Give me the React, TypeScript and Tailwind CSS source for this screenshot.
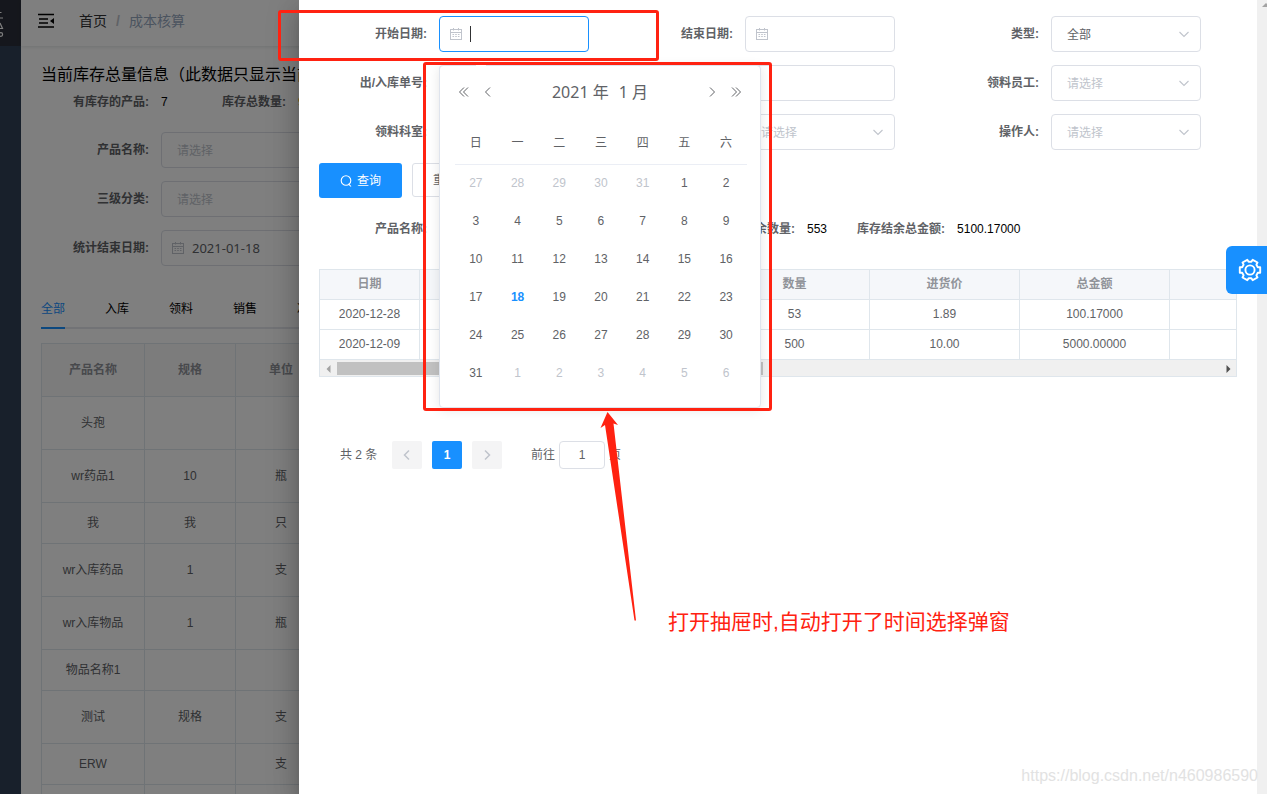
import React from 'react';

type FieldKind = 'date' | 'text' | 'select';

interface FieldProps {
  id: string;
  label: string;
  kind: FieldKind;
  value?: string;
  active?: boolean;
  wide?: boolean;
  children?: React.ReactNode;
}

const CalendarIcon = () => (
  <svg className="h-3 w-3" viewBox="0 0 12 12" fill="none" stroke="currentColor" strokeWidth="1">
    <rect x="0.5" y="1.5" width="11" height="10" />
    <path d="M0.5 4.5h11M3.5 0v2.5M8.5 0v2.5" />
    <path d="M2.5 6.5h7M2.5 8.5h7" strokeDasharray="1.6 1.1" />
  </svg>
);

const ChevronDown = () => (
  <svg className="h-3 w-3" viewBox="0 0 12 12" fill="none" stroke="currentColor" strokeWidth="1.1">
    <path d="M1.5 4l4.5 4.5L10.5 4" />
  </svg>
);

const Chevron = ({ d, className }: { d: string; className?: string }) => (
  <svg className={className ?? 'h-3 w-3'} viewBox="0 0 12 12" fill="none" stroke="currentColor">
    <path d={d} />
  </svg>
);

const Field = ({ id, label, kind, value = '', active, wide, children }: FieldProps) => (
  <div className="mb-[13px] flex">
    <label htmlFor={id} className="flex h-9 w-[120px] shrink-0 items-center justify-end pr-3 font-bold text-[#606266]">
      {label}
    </label>
    <div className={`relative ${wide ? 'w-[200px]' : 'w-[150px]'}`}>
      {kind === 'select' ? (
        <select
          id={id}
          defaultValue={value}
          className={`h-9 w-full appearance-none rounded border border-[#dcdfe6] bg-white px-[15px] pt-0.5 outline-none ${value ? 'text-[#606266]' : 'text-[#c0c4cc]'}`}
        >
          <option value="">请选择</option>
          {value && <option value={value}>{value}</option>}
        </select>
      ) : (
        <input
          id={id}
          type="text"
          defaultValue={value}
          className={`h-9 w-full rounded border bg-white pr-3 pl-[30px] font-['Noto_Sans',sans-serif] text-[13px] text-[#606266] outline-none ${active ? 'border-[#1890ff]' : 'border-[#dcdfe6]'}`}
        />
      )}
      {kind === 'date' && (
        <span className="pointer-events-none absolute inset-y-0 left-[11px] flex items-center text-[#c0c4cc]">
          <CalendarIcon />
        </span>
      )}
      {kind === 'select' && (
        <span className="pointer-events-none absolute inset-y-0 right-[11px] flex items-center text-[#c0c4cc]">
          <ChevronDown />
        </span>
      )}
      {active && <span className="absolute top-[10px] left-[31px] h-4 w-px bg-[#303133]" />}
      {children}
    </div>
  </div>
);

const weekDays = ['日', '一', '二', '三', '四', '五', '六'];
const weeks = [
  [27, 28, 29, 30, 31, 1, 2],
  [3, 4, 5, 6, 7, 8, 9],
  [10, 11, 12, 13, 14, 15, 16],
  [17, 18, 19, 20, 21, 22, 23],
  [24, 25, 26, 27, 28, 29, 30],
  [31, 1, 2, 3, 4, 5, 6],
];

const dayClass = (day: number, row: number) => {
  if ((row === 0 && day > 7) || (row === 5 && day < 31)) return 'text-[#c0c4cc]';
  if (day === 18) return 'font-bold text-[#1890ff]';
  return 'text-[#606266]';
};

const DatePicker = () => (
  <div className="absolute top-[49px] left-0 z-10 w-[322px] rounded border border-[#dfe4ed] bg-white pr-[13px] pb-[15px] pl-[15px] shadow-[0_2px_12px_0_rgba(0,0,0,0.1)]">
    <span className="absolute -top-px left-9 h-px w-[10px] bg-white" />
    <div className="mt-[11px] flex h-[30px] items-center text-[#606266]">
      <button type="button" aria-label="前一年" className="ml-[3px]">
        <Chevron d="M6 1.5L1.5 6L6 10.5M10 1.5L5.500 6L10 10.5" />
      </button>
      <button type="button" aria-label="上个月" className="ml-3">
        <Chevron d="M8 1.500L3.500 6L8 10.5" />
      </button>
      <div className="flex flex-1 justify-center gap-[10px] font-['Noto_Sans','Noto_Sans_CJK_SC',sans-serif] text-base">
        <span>2021 年</span>
        <span>1 月</span>
      </div>
      <button type="button" aria-label="下个月" className="mr-3">
        <Chevron d="M4 1.500L8.500 6L4 10.5" />
      </button>
      <button type="button" aria-label="后一年" className="mr-[5px]">
        <Chevron d="M2 1.500L6.500 6L2 10.5M6 1.500L10.500 6L6 10.5" />
      </button>
    </div>
    <table className="mt-[15px] w-full table-fixed border-collapse text-center">
      <thead>
        <tr className="h-[42px] border-b border-[#ebeef5] text-[#606266]">
          {weekDays.map(day => (
            <th key={day} className="font-normal">{day}</th>
          ))}
        </tr>
      </thead>
      <tbody>
        {weeks.map((week, row) => (
          <tr key={row} className="h-[38px]">
            {week.map(day => (
              <td key={day}>
                <button type="button" className={dayClass(day, row)}>{day}</button>
              </td>
            ))}
          </tr>
        ))}
      </tbody>
    </table>
  </div>
);

const stockRows = [
  { name: '头孢', spec: '', unit: '', tall: true },
  { name: 'wr药品1', spec: '10', unit: '瓶', tall: true },
  { name: '我', spec: '我', unit: '只', tall: false },
  { name: 'wr入库药品', spec: '1', unit: '支', tall: true },
  { name: 'wr入库物品', spec: '1', unit: '瓶', tall: true },
  { name: '物品名称1', spec: '', unit: '', tall: false },
  { name: '测试', spec: '规格', unit: '支', tall: true },
  { name: 'ERW', spec: '', unit: '支', tall: false },
  { name: '', spec: '', unit: '', tall: true },
];

const StockPage = () => (
  <div className="flex h-full">
    <aside className="w-[21px] shrink-0 bg-[#304156]">
      <div className="h-[46px] overflow-hidden bg-[#2b2f3a]">
        <svg className="h-[46px] w-[21px]" viewBox="0 0 21 46" fill="none" stroke="#fff" strokeWidth="1.2">
          <path d="M0 12.500h1.500M0 18h3M0 23l2.500 5.500H0" />
          <circle cx="0.8" cy="34.500" r="1.800" />
        </svg>
      </div>
    </aside>
    <div className="min-w-0 flex-1">
      <header className="flex h-[46px] items-center bg-white pb-1 text-sm shadow-[0_1px_4px_rgba(0,21,41,0.12)]">
        <button type="button" aria-label="菜单" className="ml-[17px]">
          <svg className="h-4 w-4" viewBox="0 0 16 16" fill="none" stroke="#000" strokeWidth="1.600">
            <path d="M0 1.500h16M1 6h9M1 10h9M0 14h16" />
            <path d="M16 5v6l-4-3z" fill="#000" stroke="none" />
          </svg>
        </button>
        <nav className="ml-[25px] flex">
          <a href="#home" className="text-[#303133]">首页</a>
          <span className="mx-[9px] font-bold text-[#c0c4cc]">/</span>
          <span className="text-[#97a8be]">成本核算</span>
        </nav>
      </header>
      <main className="px-5 pt-[19px]">
        <h1 className="text-base leading-5 whitespace-nowrap">当前库存总量信息（此数据只显示当前库存）</h1>
        <div className="mt-[7px] mb-5 flex leading-5 whitespace-nowrap">
          <div className="w-[120px] pr-3 text-right font-bold text-[#606266]">有库存的产品:</div>
          <div className="w-[61px]">7</div>
          <div className="w-[76px] pr-3 font-bold text-[#606266]">库存总数量:</div>
          <div className="text-[#ff8c00]">980</div>
        </div>
        <Field id="stock-name" label="产品名称:" kind="select" wide />
        <Field id="stock-category" label="三级分类:" kind="select" wide />
        <Field id="stock-end" label="统计结束日期:" kind="date" value="2021-01-18" wide />
        <div className="mt-6 flex gap-10 border-b-2 border-[#e4e7ed]">
          <button type="button" className="-mb-0.5 h-[39px] border-b-2 border-[#1890ff] text-[#1890ff]">全部</button>
          <button type="button">入库</button>
          <button type="button">领料</button>
          <button type="button">销售</button>
          <button type="button">冲销</button>
        </div>
        <table className="mt-[14px] w-[467px] table-fixed border-collapse border border-[#dfe6ec] text-center text-[#606266]">
          <thead>
            <tr className="h-[53px] bg-[#f8f8f9] text-[#909399]">
              <th className="w-[103px] border border-[#dfe6ec]">产品名称</th>
              <th className="w-[91px] border border-[#dfe6ec]">规格</th>
              <th className="w-[91px] border border-[#dfe6ec]">单位</th>
              <th className="border border-[#dfe6ec]">库存数量</th>
            </tr>
          </thead>
          <tbody>
            {stockRows.map((row, i) => (
              <tr key={i} className={row.tall ? 'h-[53px]' : 'h-[41px]'}>
                <td className="border border-[#dfe6ec]">{row.name}</td>
                <td className="border border-[#dfe6ec]">{row.spec}</td>
                <td className="border border-[#dfe6ec]">{row.unit}</td>
                <td className="border border-[#dfe6ec]" />
              </tr>
            ))}
          </tbody>
        </table>
      </main>
    </div>
  </div>
);

const records = [
  { date: '2020-12-28', count: '53', price: '1.89', total: '100.17000' },
  { date: '2020-12-09', count: '500', price: '10.00', total: '5000.00000' },
];

const cell = 'border-r border-b border-[#dfe6ec] pb-0.5';

const RecordTable = () => (
  <div className="overflow-hidden border border-[#dfe6ec]">
    <table className="w-[1950px] table-fixed border-separate border-spacing-0 text-center text-[#606266]">
      <thead>
        <tr className="h-[30px] bg-[#f5f7fa] text-[#909399]">
          <th className={`${cell} w-[100px]`}>日期</th>
          <th className={`${cell} w-[150px]`}>类型</th>
          <th className={`${cell} w-[150px]`}>单号</th>
          <th className={`${cell} w-[150px]`}>数量</th>
          <th className={`${cell} w-[150px]`}>进货价</th>
          <th className={`${cell} w-[150px]`}>总金额</th>
          <th className={cell} />
        </tr>
      </thead>
      <tbody>
        {records.map(record => (
          <tr key={record.date} className="h-[30px]">
            <td className={cell}>{record.date}</td>
            <td className={cell} />
            <td className={cell} />
            <td className={cell}>{record.count}</td>
            <td className={cell}>{record.price}</td>
            <td className={cell}>{record.total}</td>
            <td className={cell} />
          </tr>
        ))}
      </tbody>
    </table>
    <div className="flex h-4 items-end bg-[#f0f0f0]">
      <svg className="h-[15px] w-[17px]" viewBox="0 0 17 15">
        <path d="M10.500 4v8L6.500 8z" fill="#a3a3a3" />
      </svg>
      <div className="mb-px h-[13px] w-[426px] bg-[#c1c1c1]" />
      <svg className="ml-auto h-[15px] w-[17px]" viewBox="0 0 17 15">
        <path d="M7.500 4v8L11.500 8z" fill="#505050" />
      </svg>
    </div>
  </div>
);

const Pagination = () => (
  <div className="mt-16 ml-[21px] flex h-7 items-center text-[#606266]">
    <span className="w-[52px]">共 2 条</span>
    <button type="button" aria-label="上一页" className="flex h-7 w-[30px] items-center justify-center rounded-xs bg-[#f4f4f5] text-[#c0c4cc]">
      <Chevron d="M8 1.500L3.500 6L8 10.5" className="h-3 w-3 stroke-[1.5]" />
    </button>
    <button type="button" className="mx-[10px] h-7 w-[30px] rounded-xs bg-[#1890ff] font-bold text-white">1</button>
    <button type="button" aria-label="下一页" className="flex h-7 w-[30px] items-center justify-center rounded-xs bg-[#f4f4f5] text-[#c0c4cc]">
      <Chevron d="M4 1.500L8.500 6L4 10.5" className="h-3 w-3 stroke-[1.5]" />
    </button>
    <label htmlFor="page-jump" className="ml-[29px]">前往</label>
    <input id="page-jump" type="text" defaultValue="1" className="mx-1 h-7 w-[46px] rounded border border-[#dcdfe6] text-center outline-none" />
    <span>页</span>
  </div>
);

const Drawer = () => (
  <section className="relative flex min-w-0 flex-1 bg-white shadow-[0_8px_10px_-5px_rgba(0,0,0,0.2),0_16px_24px_2px_rgba(0,0,0,0.14),0_6px_30px_5px_rgba(0,0,0,0.12)]">
    <div className="min-w-0 flex-1 px-5 pt-4">
      <form className="grid grid-cols-3">
        <Field id="start" label="开始日期:" kind="date" active>
          <DatePicker />
        </Field>
        <Field id="end" label="结束日期:" kind="date" />
        <Field id="type" label="类型:" kind="select" value="全部" />
        <Field id="order" label="出/入库单号:" kind="text" />
        <Field id="supplier" label="供应商:" kind="text" />
        <Field id="staff" label="领料员工:" kind="select" />
        <Field id="department" label="领料科室:" kind="select" />
        <Field id="batch" label="批次:" kind="select" />
        <Field id="operator" label="操作人:" kind="select" />
      </form>
      <div className="flex gap-[10px]">
        <button type="button" className="flex h-[35px] w-[83px] items-center justify-center gap-[5px] rounded-[3px] bg-[#1890ff] text-white">
          <svg className="h-3 w-3" viewBox="0 0 12 12" fill="none" stroke="currentColor" strokeWidth="1.1">
            <circle cx="6" cy="5.500" r="4.800" />
            <path d="M8.500 8.800L11 11.500" />
          </svg>
          查询
        </button>
        <button type="button" className="h-[34px] w-[66px] rounded-[3px] border border-[#dcdfe6] text-[#606266]">重置</button>
      </div>
      <div className="mt-[21px] mb-[30px] flex leading-5 whitespace-nowrap">
        <div className="w-[120px] pr-3 text-right font-bold text-[#606266]">产品名称:</div>
        <div className="w-[280px]" />
        <div className="w-[88px] pr-3 text-right font-bold text-[#606266]">库存结余数量:</div>
        <div>553</div>
        <div className="ml-[30px] pr-3 font-bold text-[#606266]">库存结余总金额:</div>
        <div>5100.17000</div>
      </div>
      <RecordTable />
      <Pagination />
    </div>
    <div className="w-[10px] shrink-0 overflow-hidden bg-[#f0f0f0]">
      <svg className="h-4 w-4" viewBox="0 0 16 16">
        <path d="M5 7h8L9 3z" fill="#a3a3a3" />
      </svg>
    </div>
    <button type="button" aria-label="设置" className="absolute top-[246px] right-0 flex h-12 w-[41px] items-center rounded-l-md bg-[#1890ff] pl-3">
      <svg className="h-6 w-6" viewBox="0 0 24 24" fill="none" stroke="#fff" strokeWidth="1.900" strokeLinejoin="round">
        <path d="M19.800 9.200L22.200 9.300V14.700L19.800 14.800L18.400 17.300L19.500 19.500L14.700 22.200L13.400 20.200H10.600L9.300 22.200L4.500 19.500L5.600 17.300L4.200 14.800L1.800 14.700V9.300L4.200 9.200L5.600 6.700L4.500 4.500L9.300 1.800L10.600 3.800H13.400L14.700 1.800L19.500 4.500L18.400 6.700Z" />
        <circle cx="12" cy="12" r="4.600" />
      </svg>
    </button>
  </section>
);

// red marks drawn over the page
const Annotations = () => (
  <div className="pointer-events-none absolute inset-0 z-20">
    <div className="absolute top-[10px] left-[278px] h-[51px] w-[381px] rounded-[3px] border-3 border-[#ff2211]" />
    <div className="absolute top-[62px] left-[423px] h-[349px] w-[349px] rounded-[3px] border-3 border-[#ff2211]" />
    <svg className="absolute top-[411px] left-[598px] h-[212px] w-10" viewBox="0 0 40 212">
      <path d="M9.500 1L20 14l-4.500-1.500L38 209.500h-1.500L7 14l-4.500 3z" fill="#ff2211" />
    </svg>
    <p className="absolute top-[608px] left-[668px] text-[21px] leading-7 whitespace-nowrap text-[#ff2211]">
      打开抽屉时,自动打开了时间选择弹窗
    </p>
    <p className="absolute right-[9px] bottom-2 text-base leading-5 text-[#e2e2e2]">https://blog.csdn.net/n460986590</p>
  </div>
);

export default function App() {
  return (
    <div className="relative h-screen overflow-hidden bg-white font-['Liberation_Sans','Noto_Sans_CJK_SC',sans-serif] text-xs text-black">
      <StockPage />
      <div className="absolute inset-0 flex bg-black/50 pl-[299px]">
        <Drawer />
      </div>
      <Annotations />
    </div>
  );
}
